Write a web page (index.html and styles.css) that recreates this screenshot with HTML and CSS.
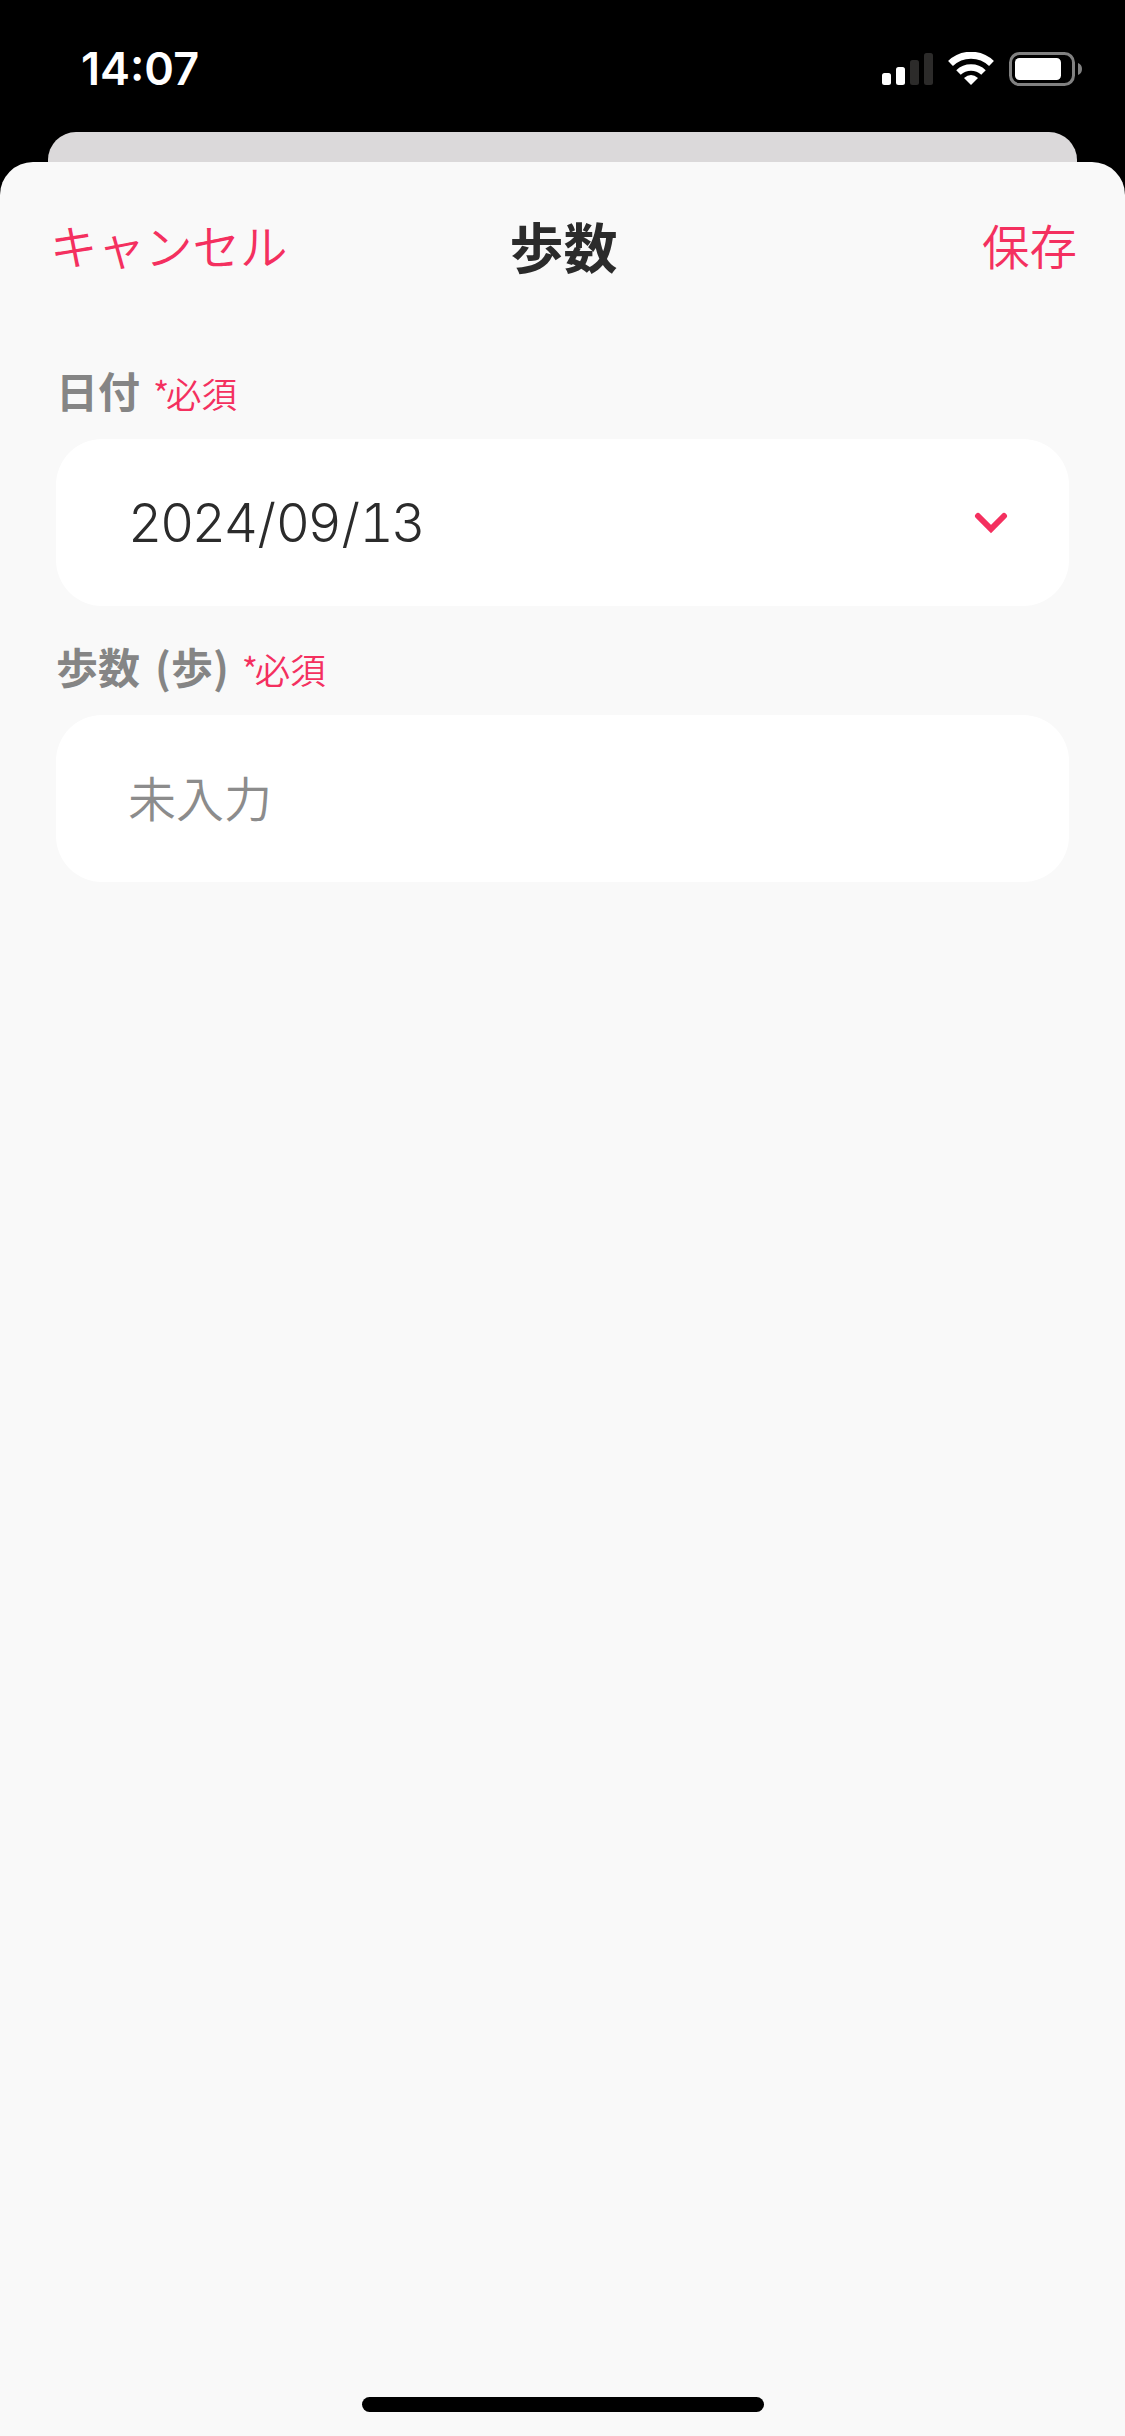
FILE: index.html
```html
<!DOCTYPE html>
<html lang="ja">
<head>
<meta charset="utf-8">
<title>歩数</title>
<link rel="stylesheet" href="styles.css">
</head>
<body>
<div class="screen">
  <header class="status">
    <span class="time">14:07</span>
    <svg class="status-icons" width="202" height="36" viewBox="0 0 202 36">
      <g fill="#fff">
        <rect x="0" y="21" width="9" height="12" rx="2.5"/>
        <rect x="14" y="15" width="9" height="18" rx="2.5"/>
      </g>
      <g fill="#2c2b2a">
        <rect x="28" y="8" width="9" height="25" rx="2.5"/>
        <rect x="42" y="1" width="9" height="32" rx="2.5"/>
      </g>
      <g fill="none" stroke="#fff">
        <path d="M68.500 11.500A29.500 29.500 0 0 1 109.500 11.500" stroke-width="7"/>
        <path d="M76.500 20.500A18 18 0 0 1 101.500 20.500" stroke-width="6.500"/>
      </g>
      <path d="M89 33L82 26Q89 20 96 26Z" fill="#fff"/>
      <rect x="128.500" y="1.500" width="63" height="31" rx="9" fill="none" stroke="#818181" stroke-width="3"/>
      <rect x="133" y="6" width="46" height="22" rx="4.500" fill="#fff"/>
      <path d="M196 11Q200 12.500 200 17T196 23Z" fill="#818181"/>
    </svg>
  </header>
  <div class="back-card"></div>
  <main class="sheet">
    <nav class="nav">
      <span class="action">キャンセル</span>
      <h1 class="title">歩数</h1>
      <span class="action save">保存</span>
    </nav>
    <form class="form">
      <div class="field">
        <div class="label">日付<span class="required"><span class="star">*</span>必須</span></div>
        <div class="box">
          <span class="date">2024<span class="slash">/</span>09<span class="slash">/</span>13</span>
          <svg class="chevron" width="34" height="22" viewBox="0 0 34 22"><path d="M4 4L17 17L30 4" fill="none" stroke="#f4305f" stroke-width="6" stroke-linecap="round"/></svg>
        </div>
      </div>
      <div class="field">
        <div class="label">歩数<span class="unit">(歩)</span><span class="required"><span class="star">*</span>必須</span></div>
        <div class="box"><span class="placeholder">未入力</span></div>
      </div>
    </form>
    <div class="home-indicator"></div>
  </main>
</div>
</body>
</html>
```
FILE: styles.css
```css
* { box-sizing: border-box; }
body {
  margin: 0;
  background: #000;
  font-family: "Noto Sans CJK JP", sans-serif;
}
.screen {
  width: 1125px;
  height: 2436px;
  display: flex;
  flex-direction: column;
  background: #000;
  overflow: hidden;
}
.status {
  height: 132px;
  padding: 40px 42px 0 81px;
  display: flex;
  justify-content: space-between;
  align-items: flex-start;
}
.time {
  color: #fff;
  font: 600 45px/58px Inter, sans-serif;
}
.status-icons {
  margin-top: 12px;
  margin-right: -1px;
}
.back-card {
  height: 30px;
  margin: 0 48px;
  border-radius: 28px 28px 0 0;
  background: #dbd9da;
}
.sheet {
  flex: 1;
  display: flex;
  flex-direction: column;
  background: #f9f9f9;
  border-radius: 33px 33px 0 0;
}
.nav {
  height: 172px;
  padding: 0 48px 0 50px;
  display: grid;
  grid-template-columns: 1fr auto 1fr;
  align-items: center;
}
.action {
  padding-bottom: 6px;
  color: #f4305f;
  font-size: 47.500px;
  line-height: 60px;
  font-weight: 350;
}
.save { text-align: right; }
.title {
  margin: 0;
  padding-bottom: 4px;
  color: #2b2b2b;
  font-size: 54px;
  line-height: 60px;
  font-weight: 700;
}
.form {
  flex: 1;
  padding: 26px 56px 0;
}
.field { height: 276px; }
.label {
  height: 79px;
  display: flex;
  align-items: baseline;
  color: #858585;
  font-size: 42px;
  line-height: 60px;
  font-weight: 700;
}
.unit { margin-left: 15px; }
.required {
  margin-left: 13px;
  color: #f4305f;
  font-size: 35.500px;
  font-weight: 350;
}
.star {
  display: inline-block;
  width: 13px;
}
.box {
  height: 167px;
  padding: 0 61px 0 72px;
  display: flex;
  align-items: center;
  justify-content: space-between;
  background: #fff;
  border-radius: 46px;
}
.date {
  color: #2b2b2b;
  font: 300 53px/60px Inter, sans-serif;
  font-variant-numeric: tabular-nums;
  letter-spacing: -2.400px;
}
.slash { padding: 0 2px; }
.placeholder {
  padding-bottom: 5px;
  color: #8c8c8c;
  font-size: 48px;
  line-height: 60px;
  font-weight: 350;
}
.home-indicator {
  width: 402px;
  height: 15px;
  margin: 0 auto 24px;
  border-radius: 8px;
  background: #000;
}
```
